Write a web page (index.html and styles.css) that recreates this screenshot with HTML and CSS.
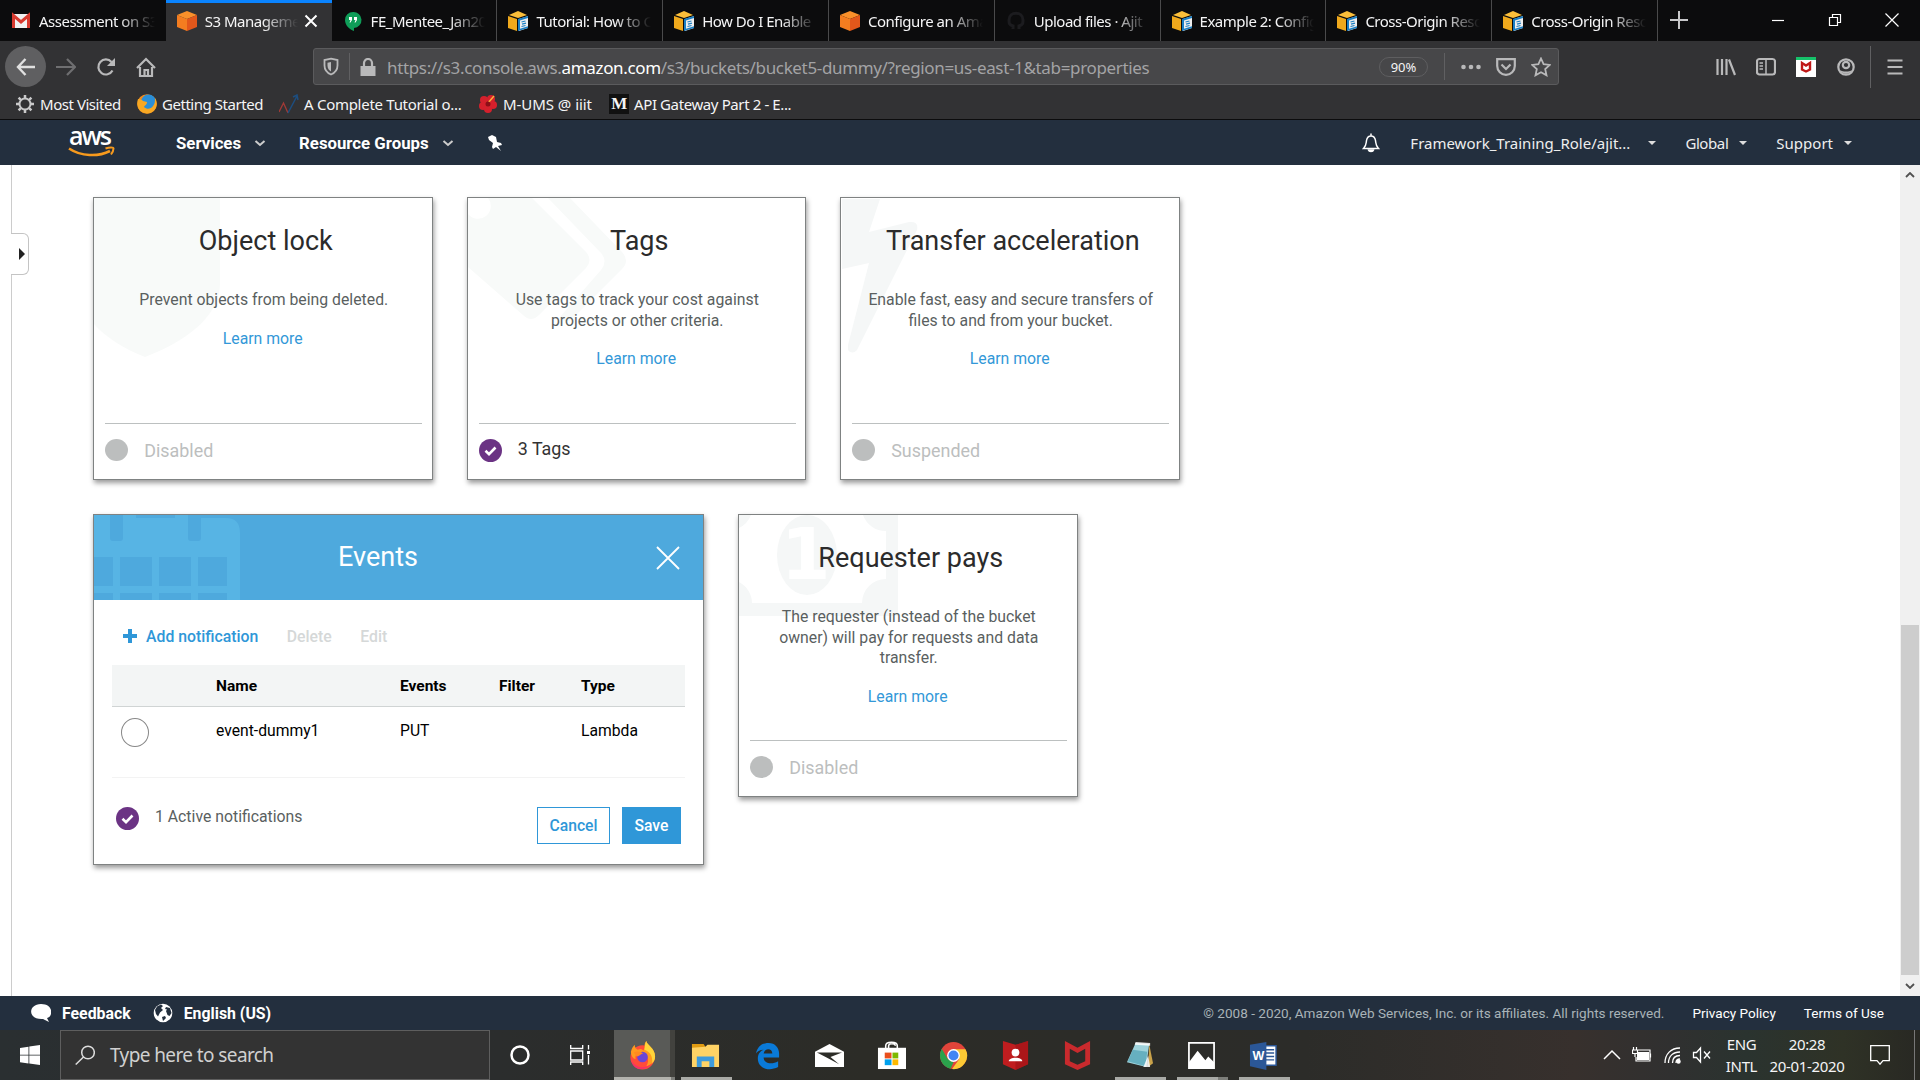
FILE: index.html
```html
<!DOCTYPE html>
<html lang="en">
<head>
<meta charset="utf-8">
<title>S3 Management Console</title>
<link rel="stylesheet" href="styles.css">
</head>
<body>
<svg class="defs" width="0" height="0" aria-hidden="true">
  <symbol id="doc-cube" viewBox="0 0 20 20"><path fill="#fbbf3a" d="M1 4 10 0l9 4-9 3z"/><path fill="#f0a91c" d="M0 5l9 3v12l-9-3z"/><path fill="#eee" d="M11 8l9-3v12l-9 3z"/><path fill="#1a7fc4" d="M10 8l10-3v2l-8 2.500v8.300l8-2.500V17l-10 3z"/><path stroke="#1a7fc4" stroke-width="1.200" d="M13.500 11l4-1M14 13.200l4-1M13.500 15.500l4-1"/></symbol>
  <symbol id="s3-cube" viewBox="0 0 20 20"><path fill="#f9902a" d="M0 4 10 0l10 4-10 4z"/><path fill="#f47d20" d="M0 4l10 4v12L0 16z"/><path fill="#e2571b" d="M20 4 10 8v12l10-4z"/></symbol>
  <symbol id="firefox" viewBox="0 0 30 30"><circle cx="15" cy="17" r="12.500" fill="#ff4b3a"/><path fill="#ff9a1f" d="M3 11c1-4 3-6 4-7 0 3 1 4 3 5 3-1 4-1 6 1 2-4 0-7 3-10 0 4 9 7 9 16 0 6-5 9-9 10 4-6 1-13-5-14-5-1-7 3-6 7-3-1-5-4-5-8z"/><path fill="#ffd43a" d="M19 0c0 4 9 7 9 16 0 3-1 5-3 7 1-8-3-12-8-14 1-3 0-6 2-9z"/><circle cx="15" cy="16.500" r="5.500" fill="#6a45d6"/><path fill="#ff8a1f" d="M6 12c3-2 7-1 10 1-3 0-4 3-7 3z"/><path fill="#f5306a" d="M3 18c2 9 14 12 21 6-5 6-19 9-21-6z"/></symbol>
  <symbol id="check" viewBox="0 0 23 23"><circle cx="11.500" cy="11.500" r="11.500" fill="#6b3384"/><path fill="none" stroke="#fff" stroke-width="2.600" d="M6.500 11.800l3.500 3.400 6.500-6.700"/></symbol>
</svg>

<div class="tabs">
  <div class="tab"><svg class="fav" viewBox="0 0 20 20"><path fill="#f2f2f2" d="M1 3h18v14H1z"/><path fill="none" stroke="#d93b30" stroke-width="3" d="M2.500 17V4.500L10 11l7.500-6.500V17"/></svg><span class="tab-t">Assessment on S3</span></div>
  <div class="tab active"><svg class="fav"><use href="#s3-cube"/></svg><span class="tab-t">S3 Management</span><svg class="tab-x" viewBox="0 0 14 14"><path d="M1.500 1.500l11 11M12.500 1.500l-11 11"/></svg></div>
  <div class="tab"><svg class="fav" viewBox="0 0 20 20"><path fill="#0f9d58" d="M10 1a8 8 0 0 1 1 16v3C6 18 2 14 2 9a8 8 0 0 1 8-8z"/><path fill="#fff" d="M6 6h3v3l-1.500 2.500H6.500L7.500 9H6zM11 6h3v3l-1.500 2.500h-1L12.500 9H11z"/></svg><span class="tab-t">FE_Mentee_Jan20</span></div>
  <div class="tab"><svg class="fav"><use href="#doc-cube"/></svg><span class="tab-t">Tutorial: How to C</span></div>
  <div class="tab"><svg class="fav"><use href="#doc-cube"/></svg><span class="tab-t">How Do I Enable</span></div>
  <div class="tab"><svg class="fav"><use href="#s3-cube"/></svg><span class="tab-t">Configure an Ama</span></div>
  <div class="tab"><svg class="fav" viewBox="0 0 20 20"><path fill="none" stroke="#1c1c1f" stroke-width="3" d="M7 18v-3c-4-1-4-3-4-6 0-9 14-9 14 0 0 3 0 5-4 6v3"/></svg><span class="tab-t">Upload files · Ajit</span></div>
  <div class="tab"><svg class="fav"><use href="#doc-cube"/></svg><span class="tab-t">Example 2: Config</span></div>
  <div class="tab"><svg class="fav"><use href="#doc-cube"/></svg><span class="tab-t">Cross-Origin Reso</span></div>
  <div class="tab"><svg class="fav"><use href="#doc-cube"/></svg><span class="tab-t">Cross-Origin Reso</span></div>
  <svg class="newtab" viewBox="0 0 18 18"><path d="M9 0v18M0 9h18"/></svg>
  <div class="win">
    <svg viewBox="0 0 14 14"><path d="M1 7.500h12"/></svg>
    <svg viewBox="0 0 14 14"><path d="M1.500 4.500h8v8h-8zM4.500 4.500v-3h8v8h-3"/></svg>
    <svg viewBox="0 0 14 14"><path d="M.5.500l13 13M13.500.500l-13 13"/></svg>
  </div>
</div>

<div class="navbar">
  <div class="nav-left">
    <span class="back"><svg viewBox="0 0 20 20"><path d="M19 10H2M9.500 2L2 10l7.500 8"/></svg></span>
    <svg class="dim" viewBox="0 0 20 20"><path d="M0 10h18M11 2l8 8-8 8"/></svg>
    <svg viewBox="0 0 20 20"><path d="M16.500 13.500A7.500 7.500 0 1 1 15.500 5"/><path class="f" d="M19 1v8h-8z"/></svg>
    <svg viewBox="0 0 20 20"><path d="M1 11l9-9 9 9M4 10v9h12v-9M8.500 19v-6h3.500v6"/></svg>
  </div>
  <div class="url">
    <svg class="i-shield" viewBox="0 0 16 18"><path d="M8 1.200l6.500 1.300V8c0 5-3 7.500-6.500 9C4.500 15.500 1.500 13 1.500 8V2.500z"/><path class="f" d="M8 4.500l-3.500.8V8c0 3 1.500 5 3.500 6z"/></svg>
    <i class="sep"></i>
    <svg class="i-lock" viewBox="0 0 16 18"><path d="M4 8V5a4 4 0 0 1 8 0v3"/><path class="f" d="M.5 8h15v10H.5z"/></svg>
    <span class="addr">https://s3.console.aws.<b>amazon.com</b>/s3/buckets/bucket5-dummy/?region=us-east-1&amp;tab=properties</span>
    <span class="zoom">90%</span>
    <i class="sep tall"></i>
    <svg class="i-dots" viewBox="0 0 20 20"><g class="f"><circle cx="2.500" cy="10" r="2.300"/><circle cx="10" cy="10" r="2.300"/><circle cx="17.500" cy="10" r="2.300"/></g></svg>
    <svg class="i-pocket" viewBox="0 0 20 20"><path d="M1.200 2.200h17.600V9a8.800 8.800 0 0 1-17.600 0z"/><path d="M5.500 7.500L10 12l4.500-4.500"/></svg>
    <svg class="i-star" viewBox="0 0 20 20"><path d="M10 1.500l2.600 5.700 6.200.7-4.600 4.200 1.300 6.200L10 15.200l-5.500 3.100 1.300-6.200L1.200 7.900l6.200-.7z"/></svg>
  </div>
  <div class="nav-right">
    <svg viewBox="0 0 20 20"><path d="M1.500 2v16M6 2v16M10.500 2v16M13 2.500l6 15.500"/></svg>
    <svg viewBox="0 0 20 20"><rect x="1" y="2" width="18" height="15.500" rx="2.500"/><path d="M10 2v15.500M3.500 6H7M3.500 9H7M3.500 12H7" stroke-width="1.500"/></svg>
    <svg viewBox="0 0 20 20"><path fill="#fff" stroke="none" d="M0 0h20v20H0z"/><path fill="#16c26a" stroke="none" d="M0 0h20v3H0z"/><path stroke="#c01818" stroke-width="2.400" d="M6 6l4 2.500L14 6v6.500l-4 2-4-2z"/></svg>
    <svg viewBox="0 0 20 20"><circle cx="10" cy="10" r="7.700"/><circle cx="10" cy="8" r="3.200"/><path class="f" d="M4 13c3 2 9 2 12 0-2 5-10 5-12 0z"/></svg>
    <i class="sep full"></i>
    <svg viewBox="0 0 20 20"><path d="M2.500 3.500h15M2.500 10h15M2.500 16.500h15"/></svg>
  </div>
</div>

<div class="bookmarks">
  <span class="bm b1"><svg viewBox="0 0 20 20"><circle cx="10" cy="10" r="5.500" fill="none" stroke="#c9c9ca" stroke-width="2"/><path stroke="#c9c9ca" stroke-width="2.500" d="M10 1v3.500M10 15.500V19M1 10h3.500M15.500 10H19M3.600 3.600l2.500 2.500M13.900 13.900l2.500 2.500M3.600 16.400l2.500-2.500M13.900 6.100l2.500-2.500"/></svg><span>Most Visited</span></span>
  <span class="bm b2"><svg viewBox="0 0 20 20"><circle cx="10" cy="10" r="9.800" fill="#f08a1c"/><circle cx="11.500" cy="8" r="7.500" fill="#2a8fd8"/><path fill="#f7a823" d="M1 5c3 0 4 1 5 2l4 1c0 3-2 3-3 5 3 3 7 2 9-1 2-2 2-5 2-8 4 6 1 15-8 15.500C1 19-1 11 1 5z"/></svg><span>Getting Started</span></span>
  <span class="bm b3"><svg viewBox="0 0 20 20"><path fill="none" stroke="#a33a36" stroke-width="1.300" d="M0 18L4.500 9l4.500 10"/><path fill="none" stroke="#1d4e80" stroke-width="1.500" d="M9 19l9-17M14 3l4-2 1 5"/></svg><span>A Complete Tutorial o...</span></span>
  <span class="bm b4"><svg viewBox="0 0 20 20"><g fill="#d5202c"><circle cx="6" cy="6" r="4"/><circle cx="13" cy="5" r="4"/><circle cx="15" cy="11" r="4"/><circle cx="10" cy="15" r="4"/><circle cx="5" cy="12" r="4"/></g><path stroke="#ffb03a" stroke-width="1.500" d="M10 9l6-7"/><circle cx="10" cy="10" r="2.500" fill="#8c0f18"/></svg><span>M-UMS @ iiit</span></span>
  <span class="bm b5"><span class="medium">M</span><span>API Gateway Part 2 - E...</span></span>
</div>

<header class="aws">
  <svg class="logo" viewBox="0 0 48 30"><text x="1" y="17" textLength="43">aws</text><path fill="none" stroke="#f79a1d" stroke-width="2.600" d="M1 20.500c12 8 29 8.500 41 2.500"/><path fill="none" stroke="#f79a1d" stroke-width="2" d="M37.500 20.500c4-1.500 8-1.500 8 0s-1 4-2.500 6"/></svg>
  <span class="menu m1">Services</span><svg class="chev" viewBox="0 0 12 8"><path d="M1.500 2L6 6l4.500-4"/></svg>
  <span class="menu m2">Resource Groups</span><svg class="chev" viewBox="0 0 12 8"><path d="M1.500 2L6 6l4.500-4"/></svg>
  <svg class="pin" viewBox="0 0 14 16"><path fill="#fff" d="M4 0l4 2 1 5 4 1 1 2-4 1 3 5-5-4-3 2-1-2 1-4-4-3-1-3z"/></svg>
  <svg class="bell" viewBox="0 0 18 20"><path d="M1.500 15.500c3-3 2.500-5 3-8C5 4.500 6.500 3 9 3s4 1.500 4.500 4.500c.5 3 0 5 3 8zM9 3V.5"/><path fill="#fff" d="M6.500 17h5c-.5 2-4.500 2-5 0z"/></svg>
  <span class="acct">Framework_Training_Role/ajit...</span><i class="caret k1"></i>
  <span class="acct tight">Global</span><i class="caret k2"></i>
  <span class="acct">Support</span><i class="caret"></i>
</header>

<main class="main">
  <aside class="side"><div class="handle"></div></aside>
  <section class="board">
    <div class="row">
      <article class="card">
        <svg class="wm" viewBox="0 0 160 160"><path fill="#f8faf9" d="M0 0H126V85c0 28-25 55-75 74C30 151 10 138 0 126Z"/></svg>
        <h2>Object lock</h2>
        <p>Prevent objects from being deleted.</p>
        <a>Learn more</a>
        <div class="status"><i class="dot"></i><span class="off">Disabled</span></div>
      </article>
      <article class="card">
        <svg class="wm" viewBox="0 0 160 160"><g fill="#f8faf9"><path d="M20 0H64L118 54q7 8 0 16L71 117q-8 8-16 0L0 69V16A12 12 0 0 0 20 0Z"/><path d="M80 0H102L154 54q8 9 0 17L104 121q-7 5-13-1L133 72q7-9 0-17Z"/></g></svg>
        <h2>Tags</h2>
        <p>Use tags to track your cost against<br>projects or other criteria.</p>
        <a>Learn more</a>
        <div class="status"><svg class="ok"><use href="#check"/></svg><span class="on">3 Tags</span></div>
      </article>
      <article class="card">
        <svg class="wm" viewBox="0 0 160 160"><path fill="#f5f7f7" d="M1 1H39L28 34 68 24q10-1 8 8L16 152q-5 5-9 0V147L28 65 1 71Z"/></svg>
        <h2>Transfer acceleration</h2>
        <p>Enable fast, easy and secure transfers of<br>files to and from your bucket.</p>
        <a>Learn more</a>
        <div class="status"><i class="dot"></i><span class="off">Suspended</span></div>
      </article>
    </div>
    <div class="row">
      <article class="card events">
        <div class="ev-head">
          <svg class="cal" viewBox="0 0 146 85"><path fill="#57b4e4" d="M0 0H42V3H81V0H107V3H132Q146 3 146 18V85H0Z"/><g fill="#4ea9dd"><path d="M16 0H29V23q0 3-3 3h-7q-3 0-3-3zM94 0h13v23q0 3-3 3h-7q-3 0-3-3zM0 42h19v29H0zM26 42h32v29H26zM65 42h32v29H65zM104 42h29v29h-29zM0 78h19v7H0zM26 78h32v7H26zM65 78h32v7H65zM104 78h29v7h-29z"/></g></svg>
          <h2>Events</h2>
          <svg class="close" viewBox="0 0 24 24"><path d="M1 1l22 22M23 1L1 23"/></svg>
        </div>
        <div class="actions"><svg viewBox="0 0 14 14"><path d="M7 0v14M0 7h14"/></svg><b class="add">Add notification</b><b>Delete</b><b>Edit</b></div>
        <div class="grid head"><span></span><span>Name</span><span>Events</span><span>Filter</span><span>Type</span></div>
        <div class="grid item"><i class="radio"></i><span>event-dummy1</span><span>PUT</span><span></span><span>Lambda</span></div>
        <div class="ev-foot"><svg class="ok"><use href="#check"/></svg><span class="note">1 Active notifications</span><button class="btn">Cancel</button><button class="btn save">Save</button></div>
      </article>
      <article class="card">
        <svg class="wm" viewBox="0 0 160 160"><g fill="#f5f7f7"><path fill-rule="evenodd" d="M0 0H159V101H0ZM0 13A24 24 0 0 0 12 0H124A24 24 0 0 0 147 16V64A24 24 0 0 0 123 88H13A24 24 0 0 0 0 67Z"/><ellipse cx="68" cy="40" rx="30" ry="40"/></g><text class="one" x="42" y="64">1</text></svg>
        <h2>Requester pays</h2>
        <p>The requester (instead of the bucket<br>owner) will pay for requests and data<br>transfer.</p>
        <a>Learn more</a>
        <div class="status"><i class="dot"></i><span class="off">Disabled</span></div>
      </article>
    </div>
  </section>
  <div class="scroll"><svg viewBox="0 0 10 6"><path d="M1 5l4-4 4 4"/></svg><i class="thumb"></i><svg viewBox="0 0 10 6"><path d="M1 1l4 4 4-4"/></svg></div>
</main>

<footer class="foot">
  <svg viewBox="0 0 20 20"><path fill="#fff" d="M10 1c13 0 12 13 6 14l2 4-6-3C-4 17-3 1 10 1z"/></svg><b class="fb">Feedback</b>
  <svg viewBox="0 0 20 20"><circle cx="10" cy="10" r="9.300" fill="#fff"/><path fill="#232f3e" d="M4 3.500l4-2 2 1.500-2 2 2 2-3 2.500-2 4L3 11 2 7zM13 4l4 1 1.500 5-2 3-2-1-1.500-4 1-1.500-2-.5zM9 14l3-1 1 2-3 3z"/></svg><b>English (US)</b>
  <span class="copy">© 2008 - 2020, Amazon Web Services, Inc. or its affiliates. All rights reserved.</span>
  <span class="l1">Privacy Policy</span><span>Terms of Use</span>
</footer>

<div class="taskbar">
  <div class="start"><svg viewBox="0 0 20 20"><path fill="#fff" d="M0 3l8.500-1.300v8H0zM9.300 1.600L20 0v9.700H9.300zM0 10.500h8.500v8L0 17.200zM9.300 10.500H20V20L9.300 18.500z"/></svg></div>
  <div class="search"><svg viewBox="0 0 20 20"><circle cx="13" cy="7.500" r="6.300"/><path d="M8.500 12L.7 19.500"/></svg><span>Type here to search</span></div>
  <div class="slot"><svg viewBox="0 0 20 20"><circle cx="10" cy="10" r="8.500" fill="none" stroke="#fff" stroke-width="2.500"/></svg></div>
  <div class="slot tv"><svg viewBox="0 0 20 20"><path fill="none" stroke="#fff" stroke-width="1.300" d="M.7 0v3.500h12V0M.7 6h12v9H.7zM.7 20v-3h12v3M18.500 0v4.500M18.500 10v9.500"/><path fill="#fff" d="M17 6h3v3h-3z"/></svg></div>
  <div class="apps">
    <div class="app run cur"><svg viewBox="0 0 30 30"><use href="#firefox"/></svg></div>
    <div class="app run"><svg viewBox="0 0 30 30"><path fill="#e09b12" d="M1 3h12l2 3v4H1z"/><path fill="#ffd365" d="M1 7l14-1 2-2h12v23H1z"/><path fill="#3e9bdc" d="M6 27V16h18v11h-5v-6h-8v6z"/></svg></div>
    <div class="app"><svg viewBox="0 0 30 30"><path fill="#0a7ad8" d="M3 13C5 5 10 2 16 2c7 0 11 5 11 11v4H11c0 6 8 8 15 4v6c-10 5-21 1-21-9 0-5 3-8 6-9-4 0-7 2-8 4zm8 0h9c0-6-8-6-9 0z"/></svg></div>
    <div class="app"><svg viewBox="0 0 30 30"><path fill="#fff" d="M0 11L15 3l15 8v16H0z"/><path fill="#2c2c27" d="M2 12h26l-12 4.500 9 7.500-13-7z"/></svg></div>
    <div class="app"><svg viewBox="0 0 30 30"><path fill="none" stroke="#fff" stroke-width="1.600" d="M9 9V5c0-5 12-5 12 0v4M12 8V5c0-3 7-3 7 0"/><path fill="#fff" d="M1 7h29v22H1z"/><path fill="#e94f1d" d="M8 12h7v6H8z"/><path fill="#7db900" d="M16 12h6v6h-6z"/><path fill="#00a1ee" d="M8 19h7v6H8z"/><path fill="#fdb900" d="M16 19h6v6h-6z"/></svg></div>
    <div class="app"><svg viewBox="0 0 30 30"><circle cx="15" cy="15" r="14" fill="#e1443a"/><path fill="#2ba24c" d="M2.900 8L9 18.500l6 3.500-3 6.700A14 14 0 0 1 2.900 8z"/><path fill="#fcc934" d="M15 8.500h12.400A14 14 0 0 1 13.500 29l7.500-10.500z"/><circle cx="15" cy="15" r="6.600" fill="#fff"/><circle cx="15" cy="15" r="5.200" fill="#4285f4"/></svg></div>
    <div class="app"><svg viewBox="0 0 30 30"><path fill="#c01d1f" d="M2 0l13 4 13-4v24l-13 6-13-6z"/><path fill="#9c1316" d="M15 4l13-4v24l-13 6z" opacity=".6"/><circle cx="15" cy="12" r="4" fill="#fff"/><path fill="#fff" d="M8 21c0-5 14-5 14 0z"/></svg></div>
    <div class="app"><svg viewBox="0 0 30 30"><path fill="#c92a2d" fill-rule="evenodd" d="M2 0l13 7L28 0v24l-13 6-13-6zM7 8v13l8 3.500 8-3.500V8l-8 4.500z"/></svg></div>
    <div class="app run"><svg viewBox="0 0 30 30"><path fill="#c9a24a" d="M25 3l4 20-5 4z"/><path fill="#9fd3dc" d="M11 2l14 1-3 24-20-5z"/><path fill="#4ea1b4" d="M8 9l15 2-2 15-18-5z" opacity=".7"/><path fill="#fff" d="M11 1l15 1v3L10 4zM19 27l5-12 2 12z" opacity=".85"/></svg></div>
    <div class="app run split"><svg viewBox="0 0 30 30"><path fill="none" stroke="#fff" stroke-width="1.800" d="M2 2h26v26H2z"/><path fill="#fff" d="M2 22l9-12 8 10 3-4 6 6v6H2z"/></svg></div>
    <div class="app run"><svg viewBox="0 0 30 30"><path fill="#fff" stroke="#2b5797" stroke-width="1.500" d="M15 5h13v20H15z"/><path stroke="#2b5797" stroke-width="1.500" d="M17 9h9M17 12.500h9M17 16h9M17 19.500h9"/><path fill="#2b5797" d="M1 4l17-3v29L1 26z"/><text class="w" x="3.500" y="20">W</text></svg></div>
  </div>
  <div class="tray">
    <svg viewBox="0 0 20 20"><path d="M2 14l8-8 8 8"/></svg>
    <svg viewBox="0 0 20 20"><path fill="#fff" stroke="none" d="M5 7h12v8H5z"/><path d="M5 5h13v11H4v-4M18.500 8.500v4M1.500 2v3M4.500 2v3M.5 5h5v3.500h-5zM3 8.500V12" stroke-width="1.200"/></svg>
    <svg viewBox="0 0 20 20"><path d="M3 18C3 9 9 3 18 3M6.500 18C6.500 11 11 7 18 7M10.500 18c0-5 3-7.500 7.500-7.500M14 18c0-2.500 1.500-4 4-4" stroke-width="1.300"/><circle cx="16.500" cy="16.500" r="1.500" fill="#fff"/></svg>
    <svg viewBox="0 0 20 20"><path d="M1.500 7.500h3l4-4.500v14l-4-4.500h-3zM12 6.500l6 7M18 6.500l-6 7" stroke-width="1.300"/></svg>
    <div class="stack lang"><span>ENG</span><span>INTL</span></div>
    <div class="stack clock"><span>20:28</span><span>20-01-2020</span></div>
    <svg class="note-i" viewBox="0 0 20 20"><path d="M.7.700h18.600v15H13l-3 3.500L7 15.700H.7z" stroke-width="1.300"/></svg>
    <i class="peek"></i>
  </div>
</div>
</body>
</html>
```
FILE: styles.css
```css
* { box-sizing: border-box; }
body {
  margin: 0;
  width: 1920px;
  height: 1080px;
  overflow: hidden;
  display: flex;
  flex-direction: column;
  background: #fff;
  font-family: Roboto, sans-serif;
}
.defs { position: absolute; }
svg, i { display: block; flex: none; }
span, b { white-space: nowrap; }

/* browser tabs */
.tabs, .navbar, .bookmarks, .taskbar { font-family: "Noto Sans", sans-serif; color: #f5f5f6; }
.tabs { height: 41px; background: #0c0c0d; display: flex; font-size: 15px; flex: none; }
.tab {
  width: 165.800px;
  flex: none;
  display: flex;
  align-items: center;
  padding: 1px 11px 0 11px;
  border-right: 1px solid #4a4a4b;
  overflow: hidden;
}
.tab:first-child { border-right: 0; }
.tab.active { background: #323234; border-top: 3px solid #0a84ff; border-right: 0; padding: 0 14px 2px 11px; }
.fav { width: 20px; height: 20px; margin-right: 8px; }
.tab-t {
  flex: 1;
  overflow: hidden;
  letter-spacing: -.5px;
  -webkit-mask-image: linear-gradient(90deg, #000 calc(100% - 36px), transparent);
  mask-image: linear-gradient(90deg, #000 calc(100% - 36px), transparent);
}
.tab-x { width: 14px; height: 14px; margin-left: 6px; stroke: #fff; stroke-width: 2; }
.newtab { width: 18px; height: 18px; margin: 11px 0 0 12px; stroke: #c8c8c9; stroke-width: 2; }
.win { margin-left: auto; display: flex; gap: 43px; padding: 13px 21px 0 0; }
.win svg { width: 14px; height: 14px; fill: none; stroke: #fff; stroke-width: 1.200; }

/* toolbar */
.navbar { height: 51px; background: #323234; display: flex; align-items: center; padding-left: 5px; flex: none; }
.navbar svg { width: 20px; height: 20px; fill: none; stroke: #b9b9ba; stroke-width: 2.200; }
.navbar svg .f { fill: #b9b9ba; stroke: none; }
.nav-left { width: 308px; display: flex; align-items: center; gap: 20px; }
.back { width: 41px; height: 41px; border-radius: 50%; background: #5f5f61; display: grid; place-items: center; margin-right: -10px; }
.navbar .back svg { stroke: #e0e0e0; stroke-width: 2.400; }
.navbar .dim { stroke: #6f6f71; }
.url { width: 1246px; height: 37px; border: 1px solid #5b5b5d; border-radius: 3px; background: #474749; display: flex; align-items: center; }
.url .i-shield { width: 16px; height: 19px; margin-left: 9px; stroke-width: 1.800; }
.sep { width: 1px; height: 27px; background: #606062; margin: 0 10px; }
.url .i-lock { width: 16px; height: 18px; }
.addr { margin-left: 11px; padding-top: 2px; font-size: 17px; letter-spacing: -.345px; color: #a3a3a5; width: 992px; }
.addr b { font-weight: 400; color: #fff; }
.zoom { width: 49px; height: 20px; border: 1px solid #5e5e60; border-radius: 10px; font-size: 13px; line-height: 18px; text-align: center; }
.sep.tall { margin: 0 16px; }
.url .i-pocket { margin-left: 15px; }
.url .i-star { margin-left: 15px; stroke-width: 1.800; }
.nav-right { margin-left: 157px; display: flex; align-items: center; gap: 20px; }
.sep.full { height: 42px; margin: 0 -6px 0 -6px; }
.bookmarks { height: 28px; background: #323234; border-bottom: 1px solid #0c0c0d; display: flex; align-items: center; font-size: 15px; padding: 0 0 4px 15px; flex: none; }
.bm { display: flex; align-items: center; gap: 5px; letter-spacing: -.46px; }
.bm svg { width: 20px; height: 20px; }
.b1 { width: 122px; }
.b2 { width: 142px; }
.b3 { width: 199px; letter-spacing: -.28px; }
.b4 { width: 131px; letter-spacing: -.05px; }
.b5 { letter-spacing: -.39px; }
.medium { width: 20px; height: 20px; background: #111; font: bold 17px/20px "Liberation Serif", serif; text-align: center; }

/* console header */
.aws { height: 45px; background: #232f3e; color: #fff; display: flex; align-items: center; flex: none; padding: 0 68px; }
.logo { width: 48px; height: 30px; }
.logo text { font: 600 25px "Open Sans", sans-serif; fill: #fff; }
.menu { font-weight: 700; font-size: 16.800px; padding-top: 1px; }
.m1 { margin-left: 60px; }
.m2 { margin-left: 33px; }
.chev { width: 12px; height: 8px; margin-left: 13px; fill: none; stroke: #ccc; stroke-width: 2; }
.pin { width: 14px; height: 16px; margin-left: 34px; }
.bell { width: 18px; height: 20px; margin: 0 30px 0 auto; fill: none; stroke: #fff; stroke-width: 1.500; }
.acct { font: 15px "Noto Sans", sans-serif; color: #eee; }
.tight { letter-spacing: -.4px; }
.caret { border: 4px solid transparent; border-top: 4px solid #ddd; border-bottom: 0; margin-left: 11px; }
.k1 { margin: 0 29px 0 18px; }
.k2 { margin-right: 29px; }

/* console body */
.main { height: 831px; display: flex; flex: none; }
.side { width: 82px; padding-top: 68px; margin-left: 11px; border-left: 1px solid #ccc; }
.handle { width: 18px; height: 42px; margin-left: -1px; border: 1px solid #c4c4c4; border-left: 0; border-radius: 0 6px 6px 0; background: #fff; display: grid; place-items: center end; padding-right: 3px; }
.handle::after { content: ""; border: 6px solid transparent; border-left: 6px solid #222; border-right: 0; }
.board { flex: 1; padding-top: 32px; display: flex; flex-direction: column; gap: 34px; }
.row { display: flex; align-items: flex-start; gap: 34px; }
.card {
  width: 339.500px;
  height: 283px;
  border: 1px solid #7f8282;
  box-shadow: 1px 3px 5px rgba(0, 0, 0, .4);
  padding: 25px 10px 0 12px;
  display: flex;
  flex-direction: column;
  align-items: center;
  position: relative;
  background: #fff;
}
.wm { position: absolute; left: 0; top: 0; width: 160px; height: 160px; }
.one { font: bold 71px "DejaVu Sans", sans-serif; fill: #fff; }
.card > * { position: relative; }
.card > .wm { position: absolute; }
h2 { margin: 0; font-weight: 400; font-size: 27px; line-height: 36px; color: #2b2b2b; padding-left: 4px; }
p { margin: 31px 0 17px; font-size: 15.800px; line-height: 20.700px; color: #5a5f5f; text-align: center; }
.card a { font-size: 15.800px; line-height: 21px; color: #3398d8; margin-right: 2px; }
.status { margin-top: auto; width: 317px; height: 56px; border-top: 1px solid #bcc0c0; display: flex; padding-top: 15px; gap: 16px; }
.dot { width: 23px; height: 22px; border-radius: 50%; background: #bcbebe; }
.ok { width: 23px; height: 23px; }
.status span { font-size: 17.900px; line-height: 22px; }
.off { color: #bcbebe; padding-top: 1px; }
.status .on { color: #333; margin-top: -1px; }

/* events panel */
.card.events { width: 611px; height: 351px; padding: 0; align-items: stretch; }
.ev-head { height: 85px; background: #4ea9dd; display: flex; padding: 24px 23px 0 244px; justify-content: space-between; position: relative; }
.cal { position: absolute; left: 0; top: 0; width: 146px; height: 85px; }
.ev-head h2 { color: #fff; padding: 0; }
.close { width: 24px; height: 24px; margin-top: 7px; stroke: #fff; stroke-width: 1.800; }
.actions { height: 65px; display: flex; align-items: center; padding: 7px 0 0 29px; font-size: 15.800px; color: #d5d8d8; }
.actions b { font-weight: 500; margin-right: 28.500px; }
.actions .add { color: #2f97d8; }
.actions svg { width: 14px; height: 14px; margin-right: 9px; stroke: #2f97d8; stroke-width: 4; }
.grid { display: grid; grid-template-columns: 104px 184px 99px 82px 1fr; margin: 0 18px; font-size: 15.700px; color: #000; }
.head { height: 42px; background: #f3f5f5; border-bottom: 1px solid #d0d4d4; align-items: center; font-weight: 700; font-size: 15.500px; }
.item { height: 71px; border-bottom: 1px solid #f3f3f3; padding-top: 11px; line-height: 25px; }
.radio { width: 28px; height: 29px; border: 1px solid #888; border-radius: 50%; margin-left: 9px; }
.ev-foot { display: flex; padding: 29px 22px 0 22px; }
.note { margin: 1px auto 0 16px; font-size: 15.800px; line-height: 18px; color: #5a5f5f; }
.btn { height: 37px; width: 73px; padding: 0; border: 1px solid #2f97d8; background: #fff; color: #2f97d8; font: 500 15.700px Roboto, sans-serif; margin-left: 12px; }
.save { width: 59px; background: #2f97d8; color: #fff; }

.scroll { width: 20px; background: #f0f0f0; display: flex; flex-direction: column; align-items: center; padding: 7px 0; }
.scroll svg { width: 10px; height: 6px; fill: none; stroke: #505050; stroke-width: 1.800; }
.thumb { width: 18px; height: 350px; background: #cdcdcd; margin: auto 0 8px; }

/* console footer */
.foot { height: 34px; background: #232f3e; color: #fff; display: flex; align-items: center; flex: none; padding: 0 36px 0 31px; font-size: 13.560px; }
.foot svg { width: 20px; height: 20px; margin-right: 11px; }
.foot b { font-weight: 700; font-size: 15.850px; }
.fb { margin-right: 22px; }
.copy { margin-left: auto; color: #a9b3b8; }
.l1 { margin: 0 28px; }

/* taskbar */
.taskbar { height: 50px; flex: none; display: flex; background: linear-gradient(90deg, #2a2f31 0, #2b2d2d 26%, #2c2c27 45%, #2c2c29 68%, #37302d 82%, #303030 87%, #2a332f 91%, #2f3226 96%, #282823 100%); }
.start { width: 60px; display: grid; place-items: center; }
.taskbar svg { width: 20px; height: 20px; }
.search { width: 430px; background: #333; border: 1px solid #5e5e5e; display: flex; align-items: center; gap: 15px; padding-left: 14px; font-size: 19px; letter-spacing: -.6px; color: #d0d0d0; }
.search svg { fill: none; stroke: #ddd; stroke-width: 1.500; }
.slot { width: 60px; display: grid; place-items: center; }
.slot.tv { width: 64px; padding-right: 5px; }
.apps { display: flex; gap: 11px; }
.app { width: 51px; display: grid; place-items: center; padding-right: 2px; }
.taskbar .app svg { width: 29px; height: 29px; }
.run { border-bottom: 3px solid #a9aaa6; padding-top: 3px; }
.cur { width: 61px; margin-right: -5px; background: linear-gradient(90deg, #595a57 56px, #42423e 56px); border-image: linear-gradient(90deg, #b3b3ae 56px, #7d7e7a 56px) 1; border-width: 0 0 3px; padding-right: 5px; }
.split { border-image: linear-gradient(90deg, #a9aaa6 40px, #7d7e7a 40px) 1; border-width: 0 0 3px; }
.w { font: bold 13px "Liberation Sans", sans-serif; fill: #fff; }
.tray { margin-left: auto; display: flex; align-items: center; }
.tray svg { fill: none; stroke: #fff; stroke-width: 1.500; margin-right: 10px; }
.stack { display: flex; flex-direction: column; align-items: center; font-size: 15px; line-height: 22px; letter-spacing: -.35px; }
.lang { width: 39px; }
.clock { width: 92px; }
.tray .note-i { margin: 0 24px 0 17px; }
.peek { width: 1px; height: 50px; background: #777; margin-right: 5px; }
```
